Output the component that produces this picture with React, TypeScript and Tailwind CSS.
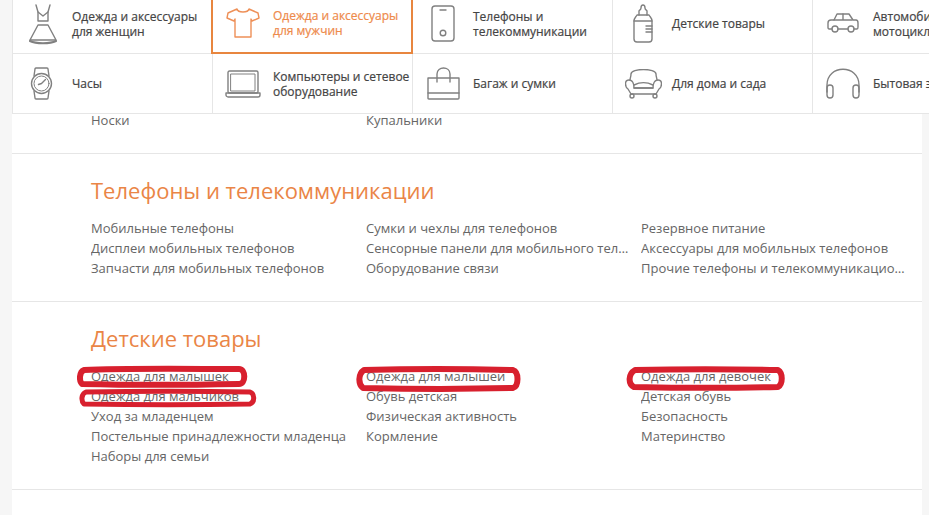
const stroke = { fill: 'none', stroke: '#808080', strokeWidth: 1.4, strokeLinecap: 'round', strokeLinejoin: 'round' } as const

function DressIcon() {
  return (
    <svg width="28" height="42" viewBox="0 0 28 42" {...stroke}>
      <path d="M7 2l2 7 0 9h10V9l2-7" />
      <path d="M9 9l5 4 5-4" />
      <path d="M9 22h10l8 15H1z" />
      <path d="M1 38c6 3 20 3 26 0" strokeWidth="2.2" />
    </svg>
  )
}

function TeeIcon() {
  return (
    <svg width="34" height="32" viewBox="0 0 34 32" fill="none" stroke="#ee9058" strokeWidth="1.4" strokeLinejoin="round">
      <path d="M11 2L2 6l-1 5 7 3 1-2v18h16V12l1 2 7-3-1-5-9-4c-1 4-11 4-12 0z" />
    </svg>
  )
}

function PhoneIcon() {
  return (
    <svg width="24" height="37" viewBox="0 0 24 37" {...stroke}>
      <rect x="1" y="1" width="22" height="35" rx="3" />
      <path d="M9 5h6" />
      <circle cx="12" cy="28" r="2.8" />
    </svg>
  )
}

function BottleIcon() {
  return (
    <svg width="20" height="39" viewBox="0 0 20 39" {...stroke}>
      <path d="M6 11V7c0-1 2-1 2-3 0-4 4-4 4 0 0 2 2 2 2 3v4" />
      <path d="M4 11h12c1 2 3 3 3 6v18c0 2-1 3-3 3H4c-2 0-3-1-3-3V17c0-3 2-4 3-6z" />
      <path d="M1 17h18M13 22h6M13 25h6M13 28h6" />
    </svg>
  )
}

function CarIcon() {
  return (
    <svg width="32" height="21" viewBox="0 0 32 21" {...stroke}>
      <path d="M5 16H2c-1 0-1-1-1-2V10c0-2 1-3 3-3h3l3-6h12l4 6h3c1 0 2 1 2 3v4c0 1 0 2-1 2h-3" />
      <path d="M11 16h10M7 7h18M16 1v6" />
      <circle cx="8" cy="16" r="3" />
      <circle cx="24" cy="16" r="3" />
    </svg>
  )
}

function WatchIcon() {
  return (
    <svg width="24" height="33" viewBox="0 0 24 33" {...stroke}>
      <path d="M4 9l1-7c0-1 1-1 1-1h11c1 0 1 0 1 1l1 7M4 24l1 7c0 1 1 1 1 1h11c1 0 1 0 1-1l1-7" />
      <circle cx="11.5" cy="16.5" r="10" />
      <circle cx="11.5" cy="16.5" r="7.5" strokeWidth="1" />
      <path d="M11.5 16.5l4-4M11.5 16.5l-3 1" />
    </svg>
  )
}

function LaptopIcon() {
  return (
    <svg width="36" height="28" viewBox="0 0 36 28" {...stroke}>
      <rect x="3" y="1" width="30" height="22" rx="1.5" />
      <rect x="6" y="4" width="24" height="17" strokeWidth="1" />
      <path d="M1 23h34v2c0 1-1 2-2 2H3c-1 0-2-1-2-2z" />
    </svg>
  )
}

function BagIcon() {
  return (
    <svg width="33" height="33" viewBox="0 0 33 33" {...stroke}>
      <path d="M1 11h31v20c0 1 0 1-1 1H2c-1 0-1 0-1-1z" />
      <path d="M1 26h31" />
      <path d="M10 15V7c0-8 13-8 13 0v8" />
    </svg>
  )
}

function SofaIcon() {
  return (
    <svg width="37" height="30" viewBox="0 0 37 30" {...stroke}>
      <path d="M5 11c0-2 1-3 1-6 0-6 25-6 25 0 0 3 1 4 1 6" />
      <path d="M9 19c0-3-1-8-5-8-5 0-4 7-1 9l3 5h25l3-5c3-2 4-9-1-9-4 0-5 5-5 8z" />
      <path d="M9 19h19M9 16c6-3 13-3 19 0" />
      <circle cx="7" cy="27" r="2" />
      <circle cx="30" cy="27" r="2" />
    </svg>
  )
}

function HeadphonesIcon() {
  return (
    <svg width="34" height="31" viewBox="0 0 34 31" {...stroke}>
      <path d="M1 24V17C1 -4 33 -4 33 17v7" />
      <rect x="1" y="17" width="6" height="13" rx="3" />
      <rect x="27" y="17" width="6" height="13" rx="3" />
    </svg>
  )
}

const topRow = [
  { icon: <DressIcon />, pad: 'pl-[16px] w-[59px]', label: ['Одежда и аксессуары', 'для женщин'] },
  { icon: <TeeIcon />, pad: 'pl-[13px] w-[60px]', label: ['Одежда и аксессуары', 'для мужчин'], active: true },
  { icon: <PhoneIcon />, pad: 'pl-[18px] w-[60px]', label: ['Телефоны и', 'телекоммуникации'] },
  { icon: <BottleIcon />, pad: 'pl-[20px] w-[59px]', label: ['Детские товары'] },
  { icon: <CarIcon />, pad: 'pl-[14px] w-[60px]', label: ['Автомобили и', 'мотоциклы'] },
]

const bottomRow = [
  { icon: <WatchIcon />, pad: 'pl-[17px] w-[59px]', label: ['Часы'] },
  { icon: <LaptopIcon />, pad: 'pl-[12px] w-[60px]', label: ['Компьютеры и сетевое', 'оборудование'] },
  { icon: <BagIcon />, pad: 'pl-[14px] w-[60px]', label: ['Багаж и сумки'] },
  { icon: <SofaIcon />, pad: 'pl-[12px] w-[59px]', label: ['Для дома и сада'] },
  { icon: <HeadphonesIcon />, pad: 'pl-[13px] w-[60px]', label: ['Бытовая электроника'] },
]

type Cell = { icon: React.ReactNode; pad: string; label: string[]; active?: boolean }

function NavCell({ cell }: { cell: Cell }) {
  return (
    <div
      className={`flex h-[60px] shrink-0 items-center whitespace-nowrap text-[12px] leading-[15px] ${
        cell.active
          ? 'relative z-10 -ml-[2px] w-[202px] border-2 border-t-0 border-[#e8863f] text-[#ee8a4b]'
          : 'w-[200px] border-r border-b border-[#e6e6e6] text-[#444]'
      }`}
    >
      <div className={`flex shrink-0 ${cell.pad}`}>{cell.icon}</div>
      <div className="[-webkit-text-stroke:0.2px_currentColor]">
        {cell.label.map((line) => (
          <div key={line}>{line}</div>
        ))}
      </div>
    </div>
  )
}

function Section({ title, columns }: { title: string; columns: string[][] }) {
  return (
    <div className="border-b border-[#e6e6e6] pl-[79px] pt-[21px] pb-[23px]">
      <h2 className="mb-[13px] text-[22px] leading-[30px] text-[#ea8546]">{title}</h2>
      <div className="flex">
        {columns.map((col, i) => (
          <ul key={i} className="w-[275px] shrink-0 text-[13px] leading-5 text-[#666]">
            {col.map((item) => (
              <li key={item} className="w-[265px] truncate">
                {item}
              </li>
            ))}
          </ul>
        ))}
      </div>
    </div>
  )
}

// red marker strokes someone drew on top of the screenshot
function Marks() {
  return (
    <svg className="absolute left-0 top-0" width="929" height="515" fill="none" stroke="#d8202e" strokeLinejoin="round">
      <path d="M84 370c40-2 110-1 155-1 7 0 7 15 0 15-50 1-115 1-157 0-3-3-3-12 2-14z" strokeWidth="6" />
      <path d="M86 392c50-1 115-1 164 0 5 2 5 10 0 12-50 1-115 1-166 0-3-3-3-10 2-12z" strokeWidth="5" />
      <path d="M364 370c40-1 105-1 149 0 6 2 6 16 0 18-40 1-105 1-150 0-5-4-5-14 1-18z" strokeWidth="6" />
      <path d="M635 370c40-1 100-1 143 0 5 3 5 14 0 17-40 1-100 1-144 0-6-3-6-13 1-17z" strokeWidth="6" />
    </svg>
  )
}

export default function App() {
  return (
    <div className="relative h-[515px] w-[929px] overflow-hidden bg-[#f6f6f6] font-['Open_Sans',sans-serif]">
      <div className="ml-3 h-[530px] w-[910px] bg-white">
        <div className="relative z-10 -mt-[6px] w-[1010px] border-l border-[#e6e6e6] bg-white">
          <div className="flex">
            {topRow.map((cell) => (
              <NavCell key={cell.label[0] + cell.label[1]} cell={cell} />
            ))}
          </div>
          <div className="flex">
            {bottomRow.map((cell) => (
              <NavCell key={cell.label[0]} cell={cell} />
            ))}
          </div>
        </div>

        <div className="-mt-1 flex h-[44px] border-b border-[#e6e6e6] pl-[79px] text-[13px] leading-5 text-[#666]">
          <div className="w-[275px]">Носки</div>
          <div className="w-[275px]">Купальники</div>
        </div>

        <Section
          title="Телефоны и телекоммуникации"
          columns={[
            ['Мобильные телефоны', 'Дисплеи мобильных телефонов', 'Запчасти для мобильных телефонов'],
            ['Сумки и чехлы для телефонов', 'Сенсорные панели для мобильного телефона', 'Оборудование связи'],
            ['Резервное питание', 'Аксессуары для мобильных телефонов', 'Прочие телефоны и телекоммуникационные продукты'],
          ]}
        />
        <Section
          title="Детские товары"
          columns={[
            ['Одежда для малышек', 'Одежда для мальчиков', 'Уход за младенцем', 'Постельные принадлежности младенца', 'Наборы для семьи'],
            ['Одежда для малышей', 'Обувь детская', 'Физическая активность', 'Кормление'],
            ['Одежда для девочек', 'Детская обувь', 'Безопасность', 'Материнство'],
          ]}
        />
      </div>
      <Marks />
    </div>
  )
}
